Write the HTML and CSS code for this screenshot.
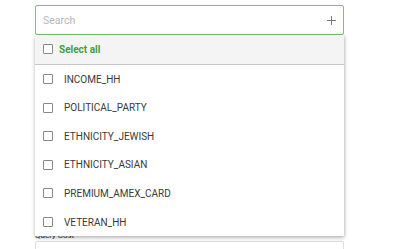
FILE: index.html
```html
<!DOCTYPE html>
<html lang="en">
<head>
    <meta charset="UTF-8">
    <meta name="viewport" content="width=device-width, initial-scale=1.0">
    <title>Audience filter</title>
    <link rel="stylesheet" href="styles.css">
</head>
<body>
    <div class="panel">
        <div class="field">
            <div class="search-box">
                <input type="text" class="search-input" placeholder="Search">
                <svg class="add-icon" width="9" height="9" viewBox="0 0 9 9">
                    <path d="M4.5 0v9M0 4.5h9" stroke="#777" stroke-width="1" fill="none"/>
                </svg>
            </div>
            <div class="dropdown">
                <div class="option select-all">
                    <span class="check"></span>
                    <span>Select all</span>
                </div>
                <div class="option"><span class="check"></span><span>INCOME_HH</span></div>
                <div class="option"><span class="check"></span><span>POLITICAL_PARTY</span></div>
                <div class="option"><span class="check"></span><span>ETHNICITY_JEWISH</span></div>
                <div class="option"><span class="check"></span><span>ETHNICITY_ASIAN</span></div>
                <div class="option"><span class="check"></span><span>PREMIUM_AMEX_CARD</span></div>
                <div class="option"><span class="check"></span><span>VETERAN_HH</span></div>
            </div>
        </div>
        <div class="label">Query Cost</div>
        <div class="cost-box"></div>
    </div>
</body>
</html>
```

FILE: styles.css
```css
body {
    margin: 0;
    font-family: Roboto, "Liberation Sans", sans-serif;
    background: #fff;
    overflow: hidden;
}
.panel {
    width: 309px;
    margin-left: 35px;
    padding-top: 5px;
}
.search-box {
    box-sizing: border-box;
    height: 30px;
    border: 1.5px solid #7cc27e;
    border-radius: 2px;
    display: flex;
    align-items: center;
    padding: 0 7px 0 7px;
}
.search-input {
    flex: 1;
    border: none;
    outline: none;
    font-family: inherit;
    font-size: 10.5px;
    padding: 0;
    color: #333;
}
.search-input::placeholder {
    color: #b5b5b5;
}
.add-icon {
    display: block;
}
.dropdown {
    background: #fff;
    box-shadow: 0 2px 4px rgba(0,0,0,.25), 1px 0 3px rgba(0,0,0,.12);
    position: relative;
    z-index: 2;
}
.option {
    height: 28.6px;
    display: flex;
    align-items: center;
    gap: 11px;
    padding-left: 8px;
    font-size: 10px;
    color: #3a3a3a;
}
.select-all {
    height: 28.8px;
    background: #f4f4f4;
    border-bottom: 1px solid #c8c8c8;
    color: #3e9f41;
    font-weight: bold;
    gap: 6px;
}
.check {
    box-sizing: border-box;
    width: 10px;
    height: 10px;
    border: 1px solid #888;
    border-radius: 1px;
    background: #fff;
}
.label {
    font-size: 8px;
    color: #333;
    margin-top: -5px;
    height: 10px;
}
.cost-box {
    box-sizing: border-box;
    height: 8px;
    border: 1px solid #ddd;
    border-bottom: none;
    border-radius: 2px 2px 0 0;
}
```
